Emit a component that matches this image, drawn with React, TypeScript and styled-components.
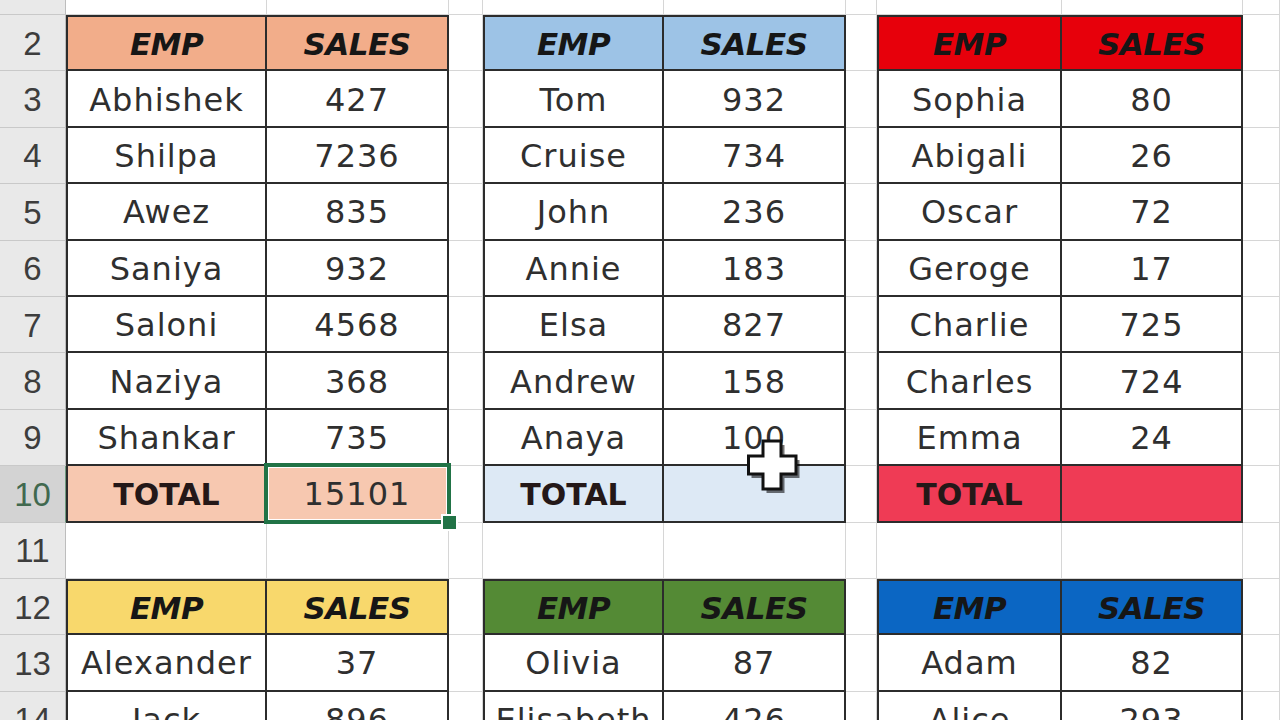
import React from "react";
import styled, { createGlobalStyle, css } from "styled-components";

const GlobalStyle = createGlobalStyle`
  html, body {
    margin: 0;
    padding: 0;
    background: #ffffff;
    overflow: hidden;
  }
  body {
    font-family: "DejaVu Sans", "Liberation Sans", sans-serif;
  }
`;

const COLS = "66px 201px 182px 34px 181px 182px 31px 185px 181px 1fr";
const ROW_H = 56.4;

const Stage = styled.div`
  position: relative;
  width: 1280px;
  height: 720px;
  overflow: hidden;
  background: #ffffff;
`;

const Sheet = styled.div`
  display: flex;
  flex-direction: column;
  margin-top: ${15 - ROW_H}px;
`;

const Row = styled.div`
  display: grid;
  grid-template-columns: ${COLS};
  height: ${ROW_H}px;
`;

const RowHeader = styled.div<{ $active?: boolean }>`
  display: flex;
  align-items: center;
  justify-content: center;
  box-sizing: border-box;
  background: ${(p) => (p.$active ? "#d3d3d3" : "#e9e9e9")};
  border-right: 1px solid ${(p) => (p.$active ? "#6f9c7f" : "#bdbdbd")};
  border-bottom: 1px solid #c9c9c9;
  color: ${(p) => (p.$active ? "#41694f" : "#3d3d3d")};
  font-family: "Liberation Sans", "DejaVu Sans", sans-serif;
  font-size: 33px;
  padding-top: 2px;
`;

type Kind = "blank" | "head" | "data" | "total";

const Cell = styled.div<{
  $kind: Kind;
  $fill?: string;
  $first?: boolean;
  $top?: boolean;
  $selected?: boolean;
}>`
  position: relative;
  z-index: ${(p) => (p.$selected ? 2 : 0)};
  display: flex;
  align-items: center;
  justify-content: center;
  box-sizing: border-box;
  white-space: nowrap;
  overflow: visible;
  color: #2f2f2f;
  font-size: 32px;
  letter-spacing: 1px;
  padding-top: 2px;
  background: ${(p) => p.$fill ?? "#ffffff"};
  border-right: 1px solid #d6d6d6;
  border-bottom: 1px solid #d6d6d6;
  ${(p) =>
    p.$kind !== "blank" &&
    css`
      border-right: 2px solid #2c2c2c;
      border-bottom: 2px solid #2c2c2c;
    `}
  ${(p) =>
    p.$kind !== "blank" &&
    p.$first &&
    css`
      border-left: 2px solid #2c2c2c;
    `}
  ${(p) =>
    p.$top &&
    css`
      border-top: 2px solid #2c2c2c;
    `}
  ${(p) =>
    p.$kind === "head" &&
    css`
      font-weight: bold;
      font-style: italic;
      letter-spacing: -0.5px;
      color: #161616;
      font-size: 31px;
    `}
  ${(p) =>
    p.$kind === "total" &&
    css`
      font-weight: bold;
      letter-spacing: 0;
      color: #241818;
      font-size: 30px;
    `}
`;

const SelectionFrame = styled.div`
  position: absolute;
  left: -3px;
  top: -3px;
  right: -4px;
  bottom: -3px;
  border: 4px solid #217346;
  box-shadow: inset 0 0 0 1px #ffffff;
  pointer-events: none;
`;

const FillHandle = styled.div`
  position: absolute;
  right: -11px;
  bottom: -11px;
  width: 13px;
  height: 13px;
  background: #217346;
  border: 2px solid #ffffff;
`;

const CursorWrap = styled.div`
  position: absolute;
  left: 747px;
  top: 439px;
  width: 54px;
  height: 54px;
  pointer-events: none;
`;

type Table = {
  head: string;
  total?: string;
  totalFill?: string;
  rows: [string, string][];
};

const top: Table[] = [
  {
    head: "#f2ad8a",
    totalFill: "#f7c8b0",
    total: "15101",
    rows: [
      ["Abhishek", "427"],
      ["Shilpa", "7236"],
      ["Awez", "835"],
      ["Saniya", "932"],
      ["Saloni", "4568"],
      ["Naziya", "368"],
      ["Shankar", "735"],
    ],
  },
  {
    head: "#9dc3e6",
    totalFill: "#dde9f5",
    total: "",
    rows: [
      ["Tom", "932"],
      ["Cruise", "734"],
      ["John", "236"],
      ["Annie", "183"],
      ["Elsa", "827"],
      ["Andrew", "158"],
      ["Anaya", "100"],
    ],
  },
  {
    head: "#e7000b",
    totalFill: "#ef3b55",
    total: "",
    rows: [
      ["Sophia", "80"],
      ["Abigali", "26"],
      ["Oscar", "72"],
      ["Geroge", "17"],
      ["Charlie", "725"],
      ["Charles", "724"],
      ["Emma", "24"],
    ],
  },
];

const bottom: Table[] = [
  {
    head: "#f8d86c",
    rows: [
      ["Alexander", "37"],
      ["Jack", "896"],
    ],
  },
  {
    head: "#548a35",
    rows: [
      ["Olivia", "87"],
      ["Elisabeth", "426"],
    ],
  },
  {
    head: "#0b66c3",
    rows: [
      ["Adam", "82"],
      ["Alice", "293"],
    ],
  },
];

type Spec = {
  kind: Kind;
  text?: string;
  fill?: string;
  first?: boolean;
  top?: boolean;
  selected?: boolean;
};

function slotCells(rowNum: number, slot: number): Spec[] {
  if (rowNum >= 2 && rowNum <= 10) {
    const t = top[slot];
    if (rowNum === 2)
      return [
        { kind: "head", text: "EMP", fill: t.head, first: true, top: true },
        { kind: "head", text: "SALES", fill: t.head, top: true },
      ];
    if (rowNum === 10)
      return [
        { kind: "total", text: "TOTAL", fill: t.totalFill, first: true },
        {
          kind: "data",
          text: t.total,
          fill: t.totalFill,
          selected: slot === 0,
        },
      ];
    const [n, v] = t.rows[rowNum - 3];
    return [
      { kind: "data", text: n, first: true },
      { kind: "data", text: v },
    ];
  }
  if (rowNum >= 12) {
    const t = bottom[slot];
    if (rowNum === 12)
      return [
        { kind: "head", text: "EMP", fill: t.head, first: true, top: true },
        { kind: "head", text: "SALES", fill: t.head, top: true },
      ];
    const [n, v] = t.rows[rowNum - 13];
    return [
      { kind: "data", text: n, first: true },
      { kind: "data", text: v },
    ];
  }
  return [{ kind: "blank" }, { kind: "blank" }];
}

function rowCells(rowNum: number): Spec[] {
  return [
    ...slotCells(rowNum, 0),
    { kind: "blank" },
    ...slotCells(rowNum, 1),
    { kind: "blank" },
    ...slotCells(rowNum, 2),
    { kind: "blank" },
  ];
}

const PlusCursor = () => (
  <svg width="54" height="54" viewBox="0 0 54 54">
    <polygon
      points="17,3 35,3 35,18 50,18 50,36 35,36 35,51 17,51 17,36 2,36 2,18 17,18"
      fill="#000"
      opacity="0.55"
      transform="translate(2.5,3)"
    />
    <polygon
      points="16,2 34,2 34,17 49,17 49,35 34,35 34,50 16,50 16,35 1.5,35 1.5,17 16,17"
      fill="#ffffff"
      stroke="#111"
      strokeWidth="3"
      strokeLinejoin="miter"
    />
  </svg>
);

export default function App() {
  const rows = Array.from({ length: 14 }, (_, i) => i + 1);
  return (
    <Stage>
      <GlobalStyle />
      <Sheet>
        {rows.map((r) => (
          <Row key={r}>
            <RowHeader $active={r === 10}>{r}</RowHeader>
            {rowCells(r).map((c, i) => (
              <Cell
                key={i}
                $kind={c.kind}
                $fill={c.fill}
                $first={c.first}
                $top={c.top}
                $selected={c.selected}
              >
                {c.text}
                {c.selected && (
                  <SelectionFrame>
                    <FillHandle />
                  </SelectionFrame>
                )}
              </Cell>
            ))}
          </Row>
        ))}
      </Sheet>
      <CursorWrap>
        <PlusCursor />
      </CursorWrap>
    </Stage>
  );
}
